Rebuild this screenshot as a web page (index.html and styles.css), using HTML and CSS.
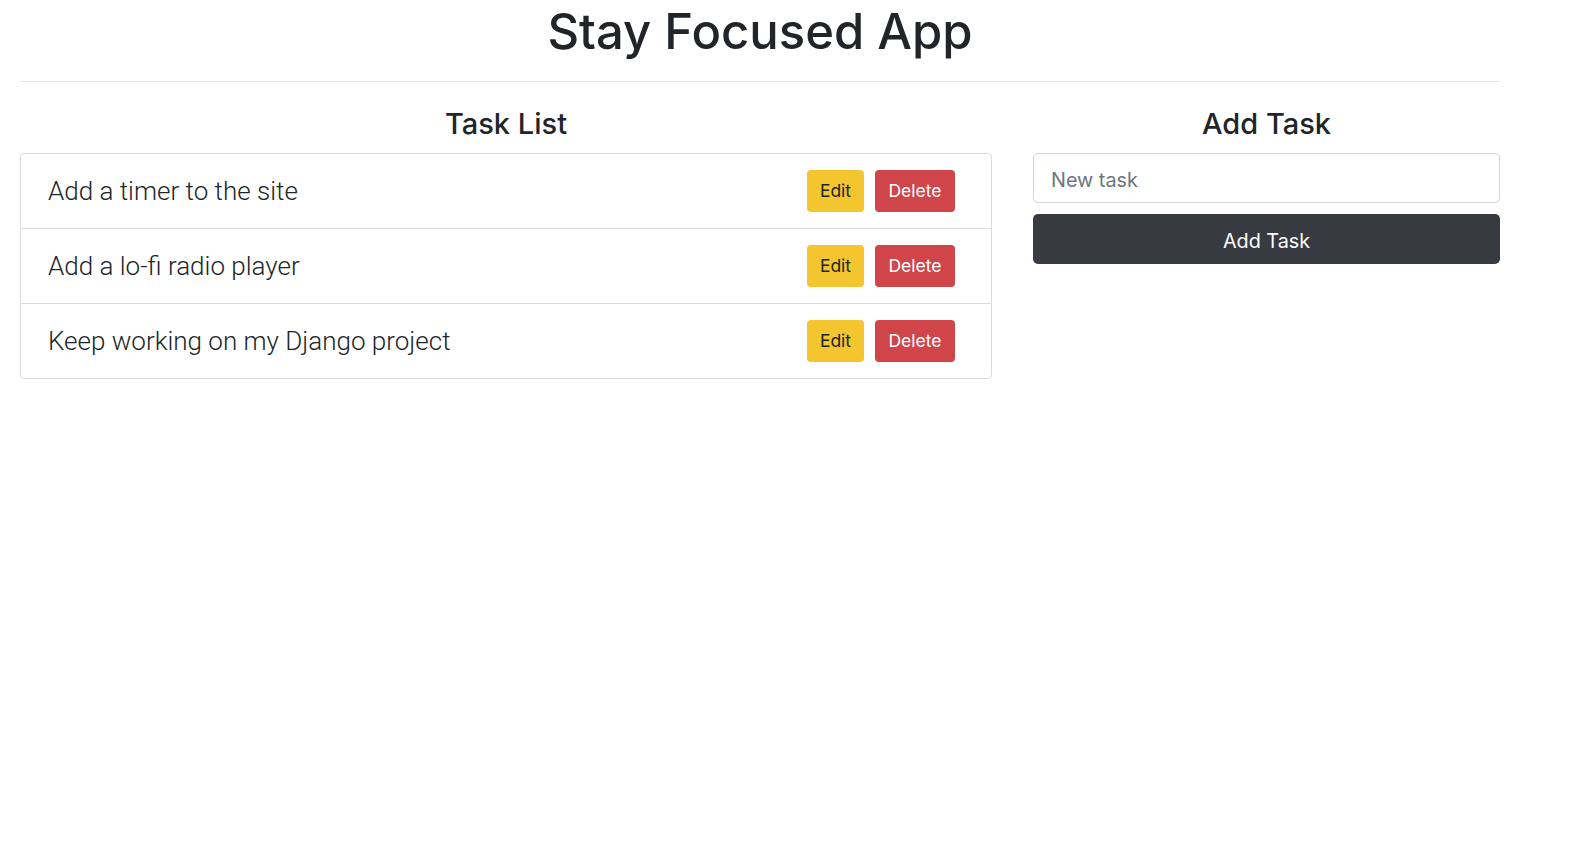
FILE: index.html
```html
<!DOCTYPE html>
<html lang="en">
<head>
<meta charset="utf-8">
<title>Stay Focused App</title>
<link rel="stylesheet" href="styles.css">
</head>
<body>
<div class="page">
  <h1 class="title">Stay Focused App</h1>
  <hr class="rule">
  <div class="columns">
    <section class="col-list">
      <h3 class="heading">Task List</h3>
      <ul class="list">
        <li class="item">
          <span class="task">Add a timer to the site</span>
          <span class="actions"><button class="btn btn-edit">Edit</button><button class="btn btn-delete">Delete</button></span>
        </li>
        <li class="item">
          <span class="task">Add a lo-fi radio player</span>
          <span class="actions"><button class="btn btn-edit">Edit</button><button class="btn btn-delete">Delete</button></span>
        </li>
        <li class="item">
          <span class="task">Keep working on my Django project</span>
          <span class="actions"><button class="btn btn-edit">Edit</button><button class="btn btn-delete">Delete</button></span>
        </li>
      </ul>
    </section>
    <section class="col-add">
      <h3 class="heading">Add Task</h3>
      <form class="add-form">
        <input class="input" type="text" placeholder="New task">
        <button class="btn-add" type="button">Add Task</button>
      </form>
    </section>
  </div>
</div>
</body>
</html>
```

FILE: styles.css
```css
* { box-sizing: border-box; }
body {
  margin: 0;
  font-family: Inter, "Noto Sans", "Liberation Sans", sans-serif;
  color: #212529;
  background: #fff;
}
.page {
  width: 1480px;
  margin-left: 20px;
}
.title {
  margin: 0;
  text-align: center;
  font-size: 49px;
  font-weight: 500;
  line-height: 63px;
}
.rule {
  margin: 18px 0 0;
  border: 0;
  border-top: 1px solid #e3e3e3;
}
.columns {
  display: grid;
  grid-template-columns: 972px 467px;
  column-gap: 41px;
  padding-top: 24px;
}
.heading {
  margin: 0 0 11px;
  text-align: center;
  font-size: 29px;
  font-weight: 500;
  line-height: 36px;
}
.list {
  list-style: none;
  margin: 0;
  padding: 0;
  border: 1px solid #dcdcdc;
  border-radius: 4px;
}
.item {
  display: flex;
  justify-content: space-between;
  align-items: center;
  padding: 16px 36px 16px 27px;
  border-top: 1px solid #dcdcdc;
}
.item:first-child { border-top: 0; }
.task {
  font-family: Roboto, Inter, sans-serif;
  font-size: 26px;
  font-weight: 300;
}
.actions {
  display: flex;
  gap: 11px;
}
.btn {
  height: 42px;
  border: 0;
  border-radius: 4px;
  font-family: inherit;
  font-size: 17.5px;
  padding: 0;
  line-height: 42px;
}
.btn-edit { background: #f3c630; color: #212529; width: 57px; }
.btn-delete { background: #cf454a; color: #fff; width: 80px; }
.add-form {
  display: flex;
  flex-direction: column;
  gap: 11px;
}
.input {
  height: 50px;
  border: 1px solid #ced4da;
  border-radius: 5px;
  padding: 3px 17px 0;
  font-family: inherit;
  font-size: 19.8px;
  color: #495057;
}
.input::placeholder { color: #6c757d; }
.btn-add {
  height: 50px;
  border: 0;
  border-radius: 5px;
  padding: 3px 0 0;
  background: #373a40;
  color: #fff;
  font-family: inherit;
  font-size: 19.8px;
}
```
